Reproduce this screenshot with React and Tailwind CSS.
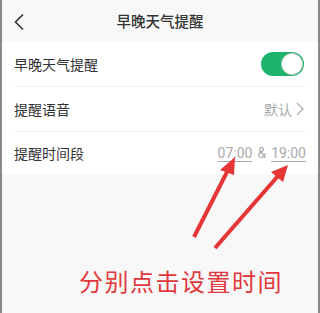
import { useState } from 'react';

const Row = ({ label, children }) => (
  <div className="flex h-[44px] items-center justify-between pl-[12px] pr-[14px]">
    <span className="text-[14px] text-[#333]">{label}</span>
    {children}
  </div>
);

const Toggle = ({ on, onChange }) => (
  <button
    type="button"
    onClick={() => onChange(!on)}
    className={`relative h-[24px] w-[43px] rounded-full transition-colors ${on ? 'bg-[#1db36b]' : 'bg-[#ddd]'}`}
  >
    <span
      className={`absolute top-[1px] size-[22px] rounded-full border border-[#ccc] bg-white transition-all ${on ? 'left-[20px]' : 'left-[1px]'}`}
    ></span>
  </button>
);

export default function App() {
  const [enabled, setEnabled] = useState(true);

  return (
    <div
      className="relative flex h-[313px] w-[320px] flex-col overflow-hidden border-x-2 border-[#8a8a8a] bg-[#f8f8f8]"
      style={{ fontFamily: '"Noto Sans CJK SC", "Noto Sans", sans-serif' }}
    >
      <div className="relative flex h-[42px] items-center justify-center">
        <svg className="absolute left-[11px] top-[13px]" width="12" height="18" viewBox="0 0 12 18" fill="none">
          <path d="M10 1.5 L2.5 9 L10 16.5" stroke="#333" strokeWidth="1.6" />
        </svg>
        <span className="text-[14.5px] font-medium text-[#333]">早晚天气提醒</span>
      </div>

      <div className="flex flex-col bg-white">
        <Row label="早晚天气提醒">
          <Toggle on={enabled} onChange={setEnabled} />
        </Row>
        <div className="ml-[12px] mr-[12px] h-px bg-[#eeeeee]"></div>
        <Row label="提醒语音">
          <div className="flex items-center gap-[4px] text-[14px] text-[#aaa]">
            <span>默认</span>
            <svg width="8" height="14" viewBox="0 0 8 14" fill="none">
              <path d="M1 1 L7 7 L1 13" stroke="#aaa" strokeWidth="1.2" />
            </svg>
          </div>
        </Row>
        <div className="ml-[12px] mr-[12px] h-px bg-[#eeeeee]"></div>
        <div className="flex h-[42px] items-center justify-between pl-[12px] pr-[12px]">
          <span className="text-[14px] text-[#333]">提醒时间段</span>
          <div className="flex items-center gap-[5px] text-[14px] text-[#aaa]" style={{ fontFamily: 'Roboto, sans-serif' }}>
            <span className="underline underline-offset-[3px]">07:00</span>
            <span>&amp;</span>
            <span className="underline underline-offset-[3px]">19:00</span>
          </div>
        </div>
      </div>

      <div className="flex flex-1 items-end justify-center pb-[20px] pl-[42px]">
        <span className="text-[24px] leading-none tracking-[1.5px] text-[#e0383d]">分别点击设置时间</span>
      </div>

      <svg className="pointer-events-none absolute left-0 top-0" width="320" height="313" viewBox="0 0 320 313">
        <g stroke="#e53535" strokeWidth="4" strokeLinecap="butt" fill="#e53535">
          <line x1="192" y1="237" x2="226" y2="170" />
          <polygon points="233,157 218,170 232,175" stroke="none" />
          <line x1="213" y1="248" x2="276" y2="176" />
          <polygon points="286,165 269,172 281,182" stroke="none" />
        </g>
      </svg>
    </div>
  );
}
